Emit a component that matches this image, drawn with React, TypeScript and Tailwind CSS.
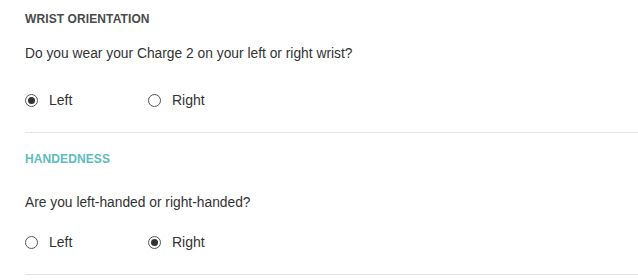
import React, { useState } from 'react';

interface Option {
  label: string;
  value: string;
}

interface SettingProps {
  title: string;
  titleClass: string;
  question: string;
  options: Option[];
  initial: string;
  questionGap: string;
  radioGap: string;
}

const Radio: React.FC<{ checked: boolean }> = ({ checked }) => (
  <span className="flex h-[13px] w-[13px] items-center justify-center rounded-full border border-[#555] bg-white">
    {checked && <span className="h-[7px] w-[7px] rounded-full bg-[#333]" />}
  </span>
);

const Setting: React.FC<SettingProps> = ({ title, titleClass, question, options, initial, questionGap, radioGap }) => {
  const [selected, setSelected] = useState(initial);

  return (
    <section className="border-b border-[#e3e3e3]">
      <h3 className={`text-[12px] font-bold leading-[14px] tracking-[0.1px] ${titleClass}`}>{title}</h3>
      <p className={`text-[13.8px] leading-[16px] text-[#333] ${questionGap}`}>{question}</p>
      <div className={`flex ${radioGap}`}>
        {options.map((option) => (
          <label
            key={option.value}
            className="flex w-[123px] cursor-pointer items-center gap-[11px] text-[14px] leading-[16px] text-[#333]"
            onClick={() => setSelected(option.value)}
          >
            <Radio checked={selected === option.value} />
            <span>{option.label}</span>
          </label>
        ))}
      </div>
    </section>
  );
};

export default function App() {
  const options = [
    { label: 'Left', value: 'left' },
    { label: 'Right', value: 'right' },
  ];

  return (
    <div className="h-[280px] w-[638px] overflow-hidden bg-white pl-[25px] font-['Liberation_Sans',Arial,sans-serif]">
      <div className="pt-[12px]">
        <Setting
          title="WRIST ORIENTATION"
          titleClass="text-[#4a4a4a]"
          question="Do you wear your Charge 2 on your left or right wrist?"
          options={options}
          initial="left"
          questionGap="mt-[20px]"
          radioGap="mt-[30px] mb-[24px]"
        />
      </div>
      <div className="pt-[19px]">
        <Setting
          title="HANDEDNESS"
          titleClass="text-[#5cbcbf]"
          question="Are you left-handed or right-handed?"
          options={options}
          initial="right"
          questionGap="mt-[29px]"
          radioGap="mt-[23px] mb-[24px]"
        />
      </div>
    </div>
  );
}
